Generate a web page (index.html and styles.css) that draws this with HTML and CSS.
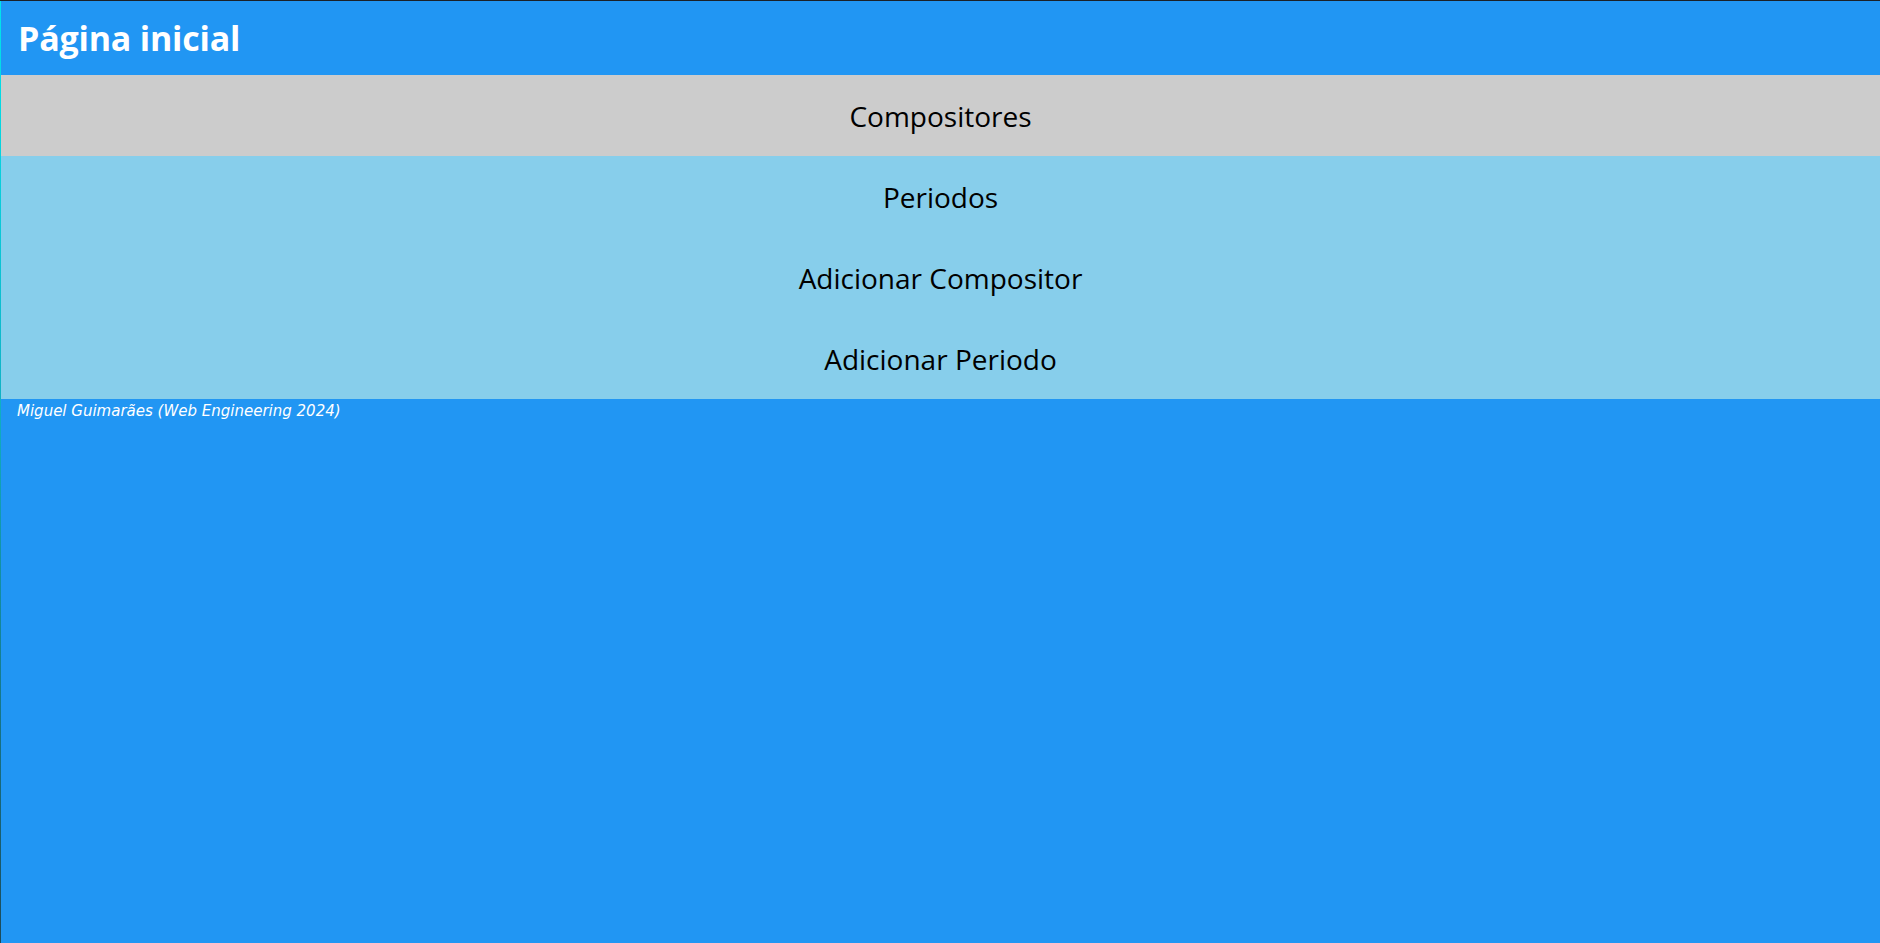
FILE: index.html
```html
<!DOCTYPE html>
<html lang="pt">
<head>
<meta charset="utf-8">
<title>Página inicial</title>
<link rel="stylesheet" href="styles.css">
</head>
<body>
<div class="page">
  <header class="top">
    <h1 class="title">Página inicial</h1>
  </header>
  <nav class="menu">
    <a class="item active" href="#">Compositores</a>
    <a class="item" href="#">Periodos</a>
    <a class="item" href="#">Adicionar Compositor</a>
    <a class="item" href="#">Adicionar Periodo</a>
  </nav>
  <footer class="foot">Miguel Guimarães (Web Engineering 2024)</footer>
</div>
</body>
</html>
```
FILE: styles.css
```css
html {
  margin: 0;
  height: 100%;
  background: linear-gradient(to bottom, #00e6ee 0%, #0fb5c8 40%, #1d4a58 100%);
}
body {
  margin: 0;
  padding: 0;
  height: 100%;
  box-sizing: border-box;
  border-top: 1px solid #1b2128;
}
.page {
  margin-left: 1px;
  height: 100%;
  background: #2196f3;
  display: flex;
  flex-direction: column;
  font-family: "Open Sans", "Noto Sans", sans-serif;
}
.top {
  height: 74px;
  display: flex;
  align-items: center;
  padding-left: 17px;
  background: #2196f3;
}
.title {
  margin: 0;
  color: #fff;
  font-size: 34px;
  font-weight: 700;
  letter-spacing: -0.2px;
}
.menu {
  display: flex;
  flex-direction: column;
  background: #87ceeb;
}
.item {
  height: 81px;
  display: flex;
  align-items: center;
  justify-content: center;
  color: #000;
  text-decoration: none;
  font-size: 28px;
}
.item.active {
  background: #cccccc;
}
.foot {
  padding: 3px 0 0 16px;
  color: #fff;
  font-family: "DejaVu Sans", Verdana, sans-serif;
  font-style: italic;
  font-size: 15px;
}
```
